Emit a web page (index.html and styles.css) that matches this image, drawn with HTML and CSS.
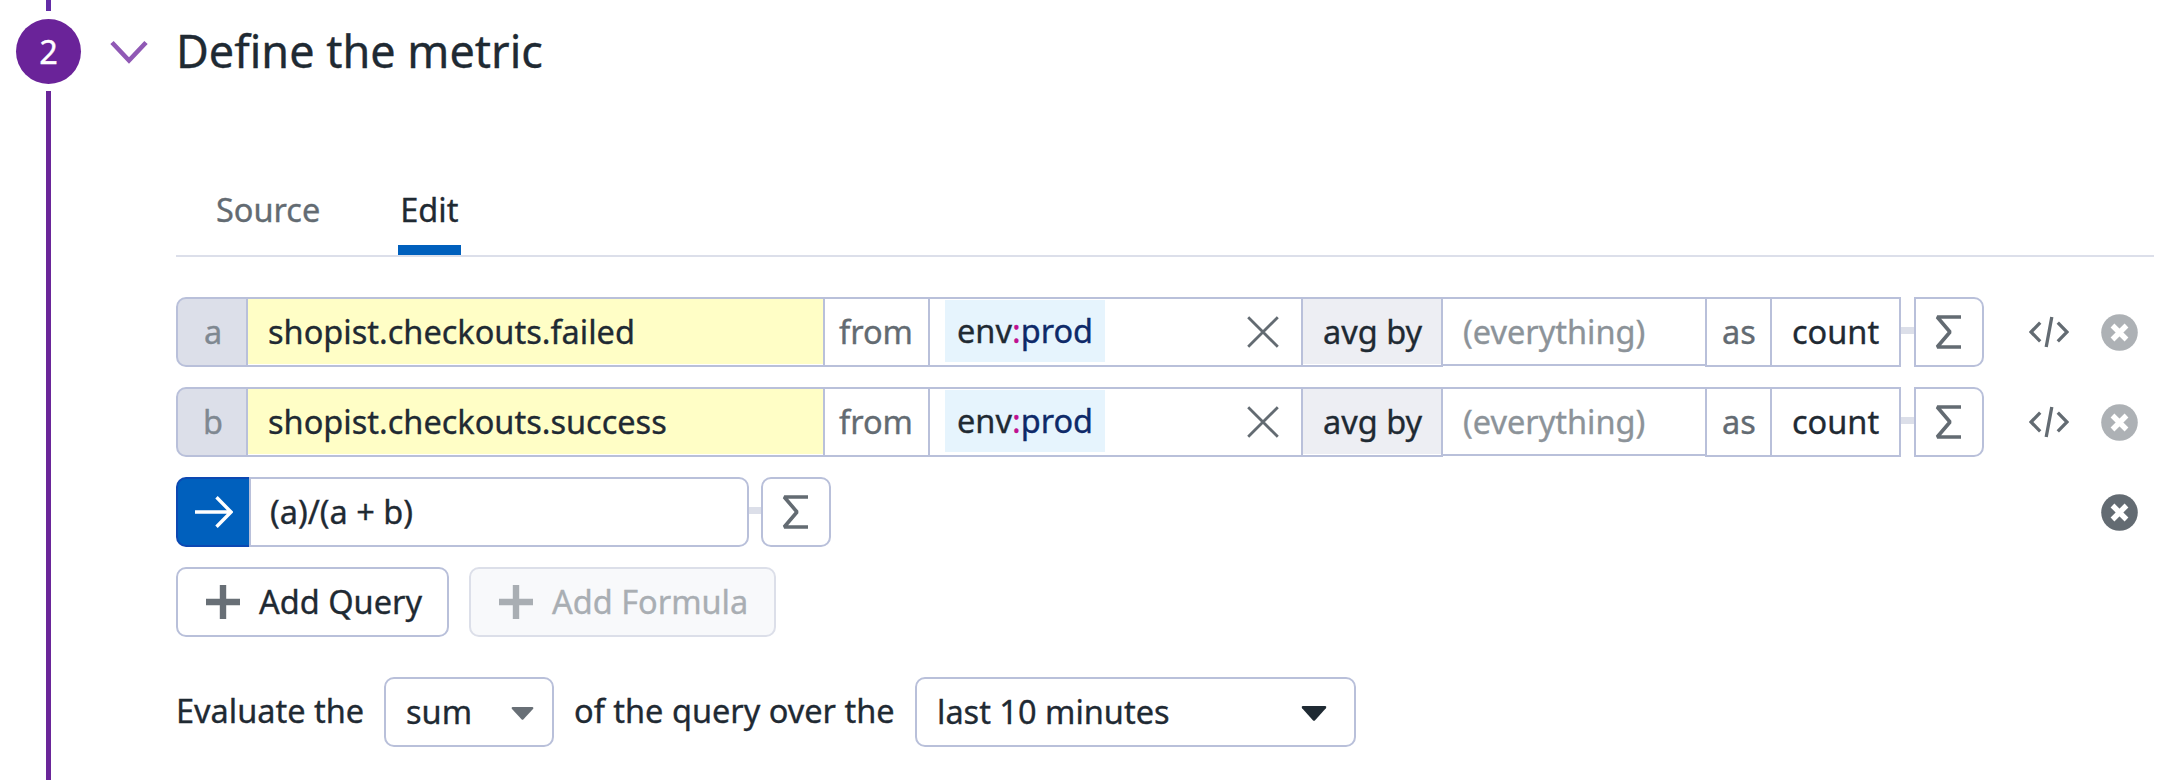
FILE: index.html
```html
<!DOCTYPE html>
<html lang="en">
<head>
<meta charset="utf-8">
<title>Define the metric</title>
<link rel="stylesheet" href="styles.css">
</head>
<body>
<svg class="defs" aria-hidden="true">
  <symbol id="sigma" viewBox="0 0 26 34"><path d="M26 2H2.2L15 17L2.2 32H26" fill="none" stroke="currentColor" stroke-width="3.6" stroke-linejoin="bevel"/></symbol>
  <symbol id="cross" viewBox="0 0 32 32"><path d="M1.2 1.2L30.8 30.8M30.8 1.2L1.2 30.8" fill="none" stroke="currentColor" stroke-width="2.8"/></symbol>
  <symbol id="code" viewBox="0 0 40 32"><path d="M11.2 6.7L2 16L11.2 25.3M28.8 6.7L38 16L28.8 25.3M22.8 1L17.2 31" fill="none" stroke="currentColor" stroke-width="3.3"/></symbol>
  <symbol id="remove" viewBox="0 0 37 37"><circle cx="18.5" cy="18.5" r="18.3" fill="currentColor"/><path d="M11.5 11.5L25.5 25.5M25.5 11.5L11.5 25.5" stroke="#fff" stroke-width="5.4"/></symbol>
  <symbol id="plus" viewBox="0 0 34 34"><path d="M0 17H34M17 0V34" stroke="currentColor" stroke-width="6.4"/></symbol>
</svg>
<div class="step">
  <div class="rail">
    <div class="rail-top"></div>
    <div class="badge">2</div>
    <div class="rail-line"></div>
  </div>
  <main class="content">
    <header class="heading">
      <svg class="chevron" viewBox="0 0 38 24"><path d="M2 2.5L19 20.5L36 2.5" fill="none" stroke="#9059b5" stroke-width="4.6"/></svg>
      <h1 class="title">Define the metric</h1>
    </header>
    <div class="body">
      <nav class="tabs">
        <span class="tab">Source</span>
        <span class="tab tab-active">Edit</span>
      </nav>
      <div class="row">
        <div class="cell letter">a</div>
        <div class="cell metric"><span>shopist.checkouts.failed</span></div>
        <div class="cell from">from</div>
        <div class="cell scope"><span class="chip">env<b class="colon">:</b><b class="value">prod</b></span><svg class="cross"><use href="#cross"/></svg></div>
        <div class="cell agg"><span>avg by</span></div>
        <div class="cell group">(everything)</div>
        <div class="cell as">as</div>
        <div class="cell count">count</div>
        <div class="link"></div>
        <div class="sum-box sum-right"><svg class="sigma"><use href="#sigma"/></svg></div>
        <svg class="code"><use href="#code"/></svg>
        <svg class="remove remove-light"><use href="#remove"/></svg>
      </div>
      <div class="row">
        <div class="cell letter">b</div>
        <div class="cell metric"><span>shopist.checkouts.success</span></div>
        <div class="cell from">from</div>
        <div class="cell scope"><span class="chip">env<b class="colon">:</b><b class="value">prod</b></span><svg class="cross"><use href="#cross"/></svg></div>
        <div class="cell agg"><span>avg by</span></div>
        <div class="cell group">(everything)</div>
        <div class="cell as">as</div>
        <div class="cell count">count</div>
        <div class="link"></div>
        <div class="sum-box sum-right"><svg class="sigma"><use href="#sigma"/></svg></div>
        <svg class="code"><use href="#code"/></svg>
        <svg class="remove remove-light"><use href="#remove"/></svg>
      </div>
      <div class="row">
        <div class="arrow"><svg class="arrow-icon" viewBox="0 0 38 32"><path d="M0 16H36M21.5 1.3L36 16L21.5 30.7" fill="none" stroke="#fff" stroke-width="3.4"/></svg></div>
        <div class="formula">(a)/(a + b)</div>
        <div class="link link-short"></div>
        <div class="sum-box"><svg class="sigma"><use href="#sigma"/></svg></div>
        <svg class="remove"><use href="#remove"/></svg>
      </div>
      <div class="row buttons">
        <div class="button"><svg class="plus"><use href="#plus"/></svg>Add Query</div>
        <div class="button disabled"><svg class="plus"><use href="#plus"/></svg>Add Formula</div>
      </div>
      <div class="row evaluate">
        <span class="phrase phrase-first">Evaluate the</span>
        <div class="select select-sum">sum<svg class="caret" viewBox="0 0 23 13"><path d="M1.5 0H21.5Q23 .5 22 2L12.5 12.3Q11.5 13.3 10.5 12.3L1 2Q0 .5 1.5 0Z" fill="currentColor"/></svg></div>
        <span class="phrase phrase-mid">of the query over the</span>
        <div class="select select-time">last 10 minutes<svg class="caret caret-dark" viewBox="0 0 23 13" preserveAspectRatio="none"><path d="M1.5 0H21.5Q23 .5 22 2L12.5 12.3Q11.5 13.3 10.5 12.3L1 2Q0 .5 1.5 0Z" fill="currentColor"/></svg></div>
      </div>
    </div>
  </main>
</div>
</body>
</html>
```
FILE: styles.css
```css
* { box-sizing: border-box; }
body {
  margin: 0;
  background: #fff;
  color: #1f2a33;
  font: 32.5px/44px "Noto Sans", sans-serif;
  -webkit-text-stroke: 0.35px currentColor;
  overflow: hidden;
}
svg { flex: none; display: block; }
.defs { width: 0; height: 0; position: absolute; }
.step { display: flex; height: 780px; }
.rail {
  width: 97px;
  padding-left: 16px;
  display: flex;
  flex-direction: column;
  flex: none;
}
.rail-top, .rail-line { width: 5px; margin-left: 30px; background: #6a2699; }
.rail-top { height: 11px; background: #632ca6; }
.rail-line { flex: 1; }
.badge {
  width: 65px;
  height: 65px;
  margin: 8px 0 7px;
  border-radius: 50%;
  background: #6a2399;
  color: #fff;
  text-align: center;
  line-height: 65px;
}
.content { flex: 1; }
.heading { display: flex; align-items: center; height: 102px; padding-left: 13px; }
.chevron { width: 38px; height: 24px; margin-top: 2px; }
.title { margin: 0 0 0 28px; font-size: 45px; line-height: 60px; font-weight: 400; }
.body { padding-left: 79px; }
.tabs {
  display: flex;
  width: 1978px;
  height: 155px;
  padding: 86px 0 0 38px;
  margin-bottom: 40px;
  border-bottom: 2px solid #dcdfea;
}
.tab { color: #636b72; padding: 0 2px; margin-right: 76px; height: 67px; }
.tab-active { width: 63px; color: #1f2a33; border-bottom: 10px solid #0060bd; }
.row { display: flex; height: 70px; margin-bottom: 20px; }
.cell {
  display: flex;
  align-items: center;
  border: 2px solid #b9c0da;
  border-left: 0;
  white-space: nowrap;
}
.letter {
  width: 72px;
  justify-content: center;
  border-left: 2px solid #b9c0da;
  border-radius: 10px 0 0 10px;
  background: #dcdfe9;
  color: #7f8891;
  padding-left: 2px;
}
.metric { width: 577px; padding: 0 0 1px; }
.metric span { flex: 1; height: 65px; line-height: 66px; padding-left: 20px; background: #fffec6; }
.from { width: 105px; padding-left: 14px; color: #636b72; }
.scope { width: 373px; padding: 0 22px 0 15px; justify-content: space-between; }
.chip { width: 160px; height: 62px; margin-bottom: 2px; line-height: 61px; padding-left: 12px; background: #e6f4fd; }
.chip b { font-weight: 400; }
.colon { color: #c0108f; }
.value { color: #0e2a69; }
.cross { width: 32px; height: 32px; color: #636b72; }
.agg { width: 140px; padding: 0 0 1px; }
.agg span { flex: 1; height: 65px; line-height: 66px; padding-left: 20px; background: #edeef3; }
.group { width: 262px; height: 69px; padding: 1px 0 0 20px; color: #8c9399; border-right: 0; }
.as { width: 67px; padding-left: 15px; border-left: 2px solid #b9c0da; color: #636b72; }
.count { width: 129px; padding-left: 20px; }
.link { width: 13px; height: 7px; margin-top: 30px; background: #dcdfe9; }
.link-short { width: 12px; }
.sum-box {
  width: 70px;
  display: flex;
  align-items: center;
  padding-left: 19px;
  border: 2px solid #b9c0da;
  border-radius: 10px;
  color: #636b72;
}
.sum-right { border-radius: 0 10px 10px 0; }
.sigma { width: 26px; height: 34px; }
.code { width: 40px; height: 32px; margin: 19px 0 0 45px; color: #636b72; }
.remove { width: 37px; height: 37px; margin: 16.5px 26.5px 0 auto; color: #636b72; }
.remove-light { color: #adb1b5; }
.arrow {
  width: 73px;
  display: flex;
  align-items: center;
  padding-left: 17px;
  background: #0060bd;
  border: 2px solid #0c48b2;
  border-right: 0;
  border-radius: 10px 0 0 10px;
}
.arrow-icon { width: 38px; height: 32px; }
.formula {
  width: 500px;
  border: 2px solid #b9c0da;
  border-radius: 0 10px 10px 0;
  padding-left: 19px;
  line-height: 66px;
}
.buttons { gap: 20px; margin-bottom: 40px; }
.button {
  display: flex;
  align-items: center;
  width: 273px;
  padding: 0 0 1px 28px;
  gap: 19px;
  border: 2px solid #b9c0da;
  border-radius: 10px;
  white-space: nowrap;
}
.disabled { width: 307px; border-color: #dcdfe9; background: #f8f9fb; color: #a9aeb3; }
.plus { width: 34px; height: 34px; color: #686f76; }
.disabled .plus { color: #a9aeb3; }
.phrase { line-height: 68px; white-space: nowrap; }
.phrase-first { width: 208px; }
.phrase-mid { width: 341px; margin-left: 20px; }
.select {
  display: flex;
  align-items: center;
  justify-content: space-between;
  border: 2px solid #b9c0da;
  border-radius: 10px;
  padding-left: 20px;
}
.select-sum { width: 170px; padding-right: 18px; }
.select-time { width: 441px; padding-right: 27px; }
.caret { width: 23px; height: 13px; margin-top: 2px; color: #686f76; }
.caret-dark { width: 26px; height: 15px; color: #1f2a33; }
```
